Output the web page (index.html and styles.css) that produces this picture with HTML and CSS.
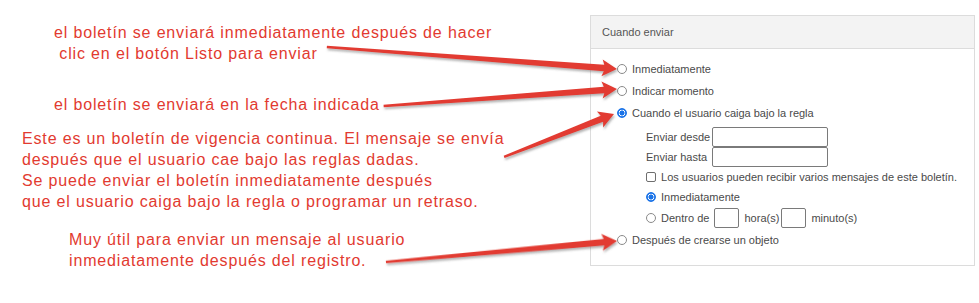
FILE: index.html
```html
<!DOCTYPE html>
<html lang="es">
<head>
  <meta charset="UTF-8" />
  <title>Cuando enviar</title>
  <link rel="stylesheet" href="styles.css">
</head>
<body>
  <div class="page">
    <div class="notes">
      <p class="note note-listo">el boletín se enviará inmediatamente después de hacer<br>&nbsp;clic en el botón Listo para enviar</p>
      <p class="note note-fecha">el boletín se enviará en la fecha indicada</p>
      <p class="note note-regla">Este es un boletín de vigencia continua. El mensaje se envía<br>después que el usuario cae bajo las reglas dadas.<br>Se puede enviar el boletín inmediatamente después<br>que el usuario caiga bajo la regla o programar un retraso.</p>
      <p class="note note-objeto">Muy útil para enviar un mensaje al usuario<br>inmediatamente después del registro.</p>
    </div>

    <section class="panel">
      <div class="panel-head">Cuando enviar</div>
      <div class="panel-body">
        <label class="opt"><input type="radio" name="when"> Inmediatamente</label>
        <label class="opt"><input type="radio" name="when"> Indicar momento</label>
        <label class="opt"><input type="radio" name="when" checked> Cuando el usuario caiga bajo la regla</label>

        <div class="sub">
          <div class="field"><span class="field-label">Enviar desde</span><input type="text" class="text-in"></div>
          <div class="field"><span class="field-label">Enviar hasta</span><input type="text" class="text-in"></div>
          <label class="sub-opt check-row"><input type="checkbox"> Los usuarios pueden recibir varios mensajes de este boletín.</label>
          <label class="sub-opt now-row"><input type="radio" name="delay" checked> Inmediatamente</label>
          <label class="sub-opt delay-row"><input type="radio" name="delay"> Dentro de <input type="text" class="small-in"> hora(s)<input type="text" class="small-in"> minuto(s)</label>
        </div>

        <label class="opt"><input type="radio" name="when"> Después de crearse un objeto</label>
      </div>
    </section>

    <svg class="arrows" width="979" height="303" viewBox="0 0 979 303">
      <defs>
        <filter id="shade" x="-10%" y="-50%" width="120%" height="200%">
          <feDropShadow dx="1" dy="2" stdDeviation="1" flood-color="#666" flood-opacity="0.5"/>
        </filter>
      </defs>
      <g fill="#e23a30" filter="url(#shade)">
        <g transform="translate(617 69) rotate(4.34)">
          <polygon points="0,0 -15,-8.5 -13,-3.3 -291,-1.2 -291,1.2 -13,3.3 -15,8.5"/>
        </g>
        <g transform="translate(617 89) rotate(-4.17)">
          <polygon points="0,0 -15,-8.5 -13,-3.3 -234,-1.2 -234,1.2 -13,3.3 -15,8.5"/>
        </g>
        <g transform="translate(614 114) rotate(-21.35)">
          <polygon points="0,0 -15,-8.5 -13,-3.3 -118,-1.2 -118,1.2 -13,3.3 -15,8.5"/>
        </g>
        <g transform="translate(617 241) rotate(-5.19)">
          <polygon points="0,0 -15,-8.5 -13,-3.3 -232,-1.2 -232,1.2 -13,3.3 -15,8.5"/>
        </g>
      </g>
    </svg>
  </div>
</body>
</html>
```

FILE: styles.css
```css
* {
  margin: 0;
  padding: 0;
  box-sizing: border-box;
}

body {
  background: #fff;
  font-family: "Liberation Sans", Arial, sans-serif;
}

.page {
  position: relative;
  display: flex;
  width: 979px;
  height: 303px;
  overflow: hidden;
}

/* annotations on the left */
.notes {
  width: 590px;
  flex: none;
}

.note {
  color: #e23a30;
  font-size: 16px;
  line-height: 21px;
  letter-spacing: 0.85px;
  white-space: nowrap;
}

.note-listo {
  margin-top: 22px;
  padding-left: 54px;
}

.note-fecha {
  margin-top: 30px;
  padding-left: 54px;
}

.note-regla {
  margin-top: 13px;
  padding-left: 22px;
}

.note-objeto {
  margin-top: 17px;
  padding-left: 69px;
}

/* panel */
.panel {
  width: 385px;
  margin-top: 15px;
  align-self: flex-start;
  border: 1px solid #dcdcdc;
  background: #fff;
  color: #4a4a4a;
  font-size: 11px;
}

.panel-head {
  height: 33px;
  padding-left: 11px;
  display: flex;
  align-items: center;
  background: #f3f3f3;
  border-bottom: 1px solid #dcdcdc;
  color: #555;
}

.panel-body {
  padding: 9px 0 14px;
}

.opt {
  height: 22px;
  display: flex;
  align-items: center;
  padding-left: 26px;
  white-space: pre;
}

.sub {
  padding-left: 55px;
  margin-top: 3px;
}

.field {
  height: 20px;
  display: flex;
  align-items: center;
}

.field-label {
  width: 66px;
}

.sub-opt {
  display: flex;
  align-items: center;
  white-space: pre;
}

.check-row { height: 19px; }
.now-row { height: 21px; }
.delay-row { height: 22px; }

/* form controls */
input[type="radio"],
input[type="checkbox"] {
  appearance: none;
  -webkit-appearance: none;
  width: 10px;
  height: 10px;
  margin: 0 2px 0 0;
  border: 1px solid #8a8a8a;
  border-radius: 50%;
  background: #fff;
  flex: none;
}

input[type="radio"]:checked {
  border-color: #1a73e8;
  background: radial-gradient(circle, #1a73e8 0 2.3px, #fff 2.8px 3.1px, #1a73e8 3.6px);
}

input[type="checkbox"] {
  border-radius: 2px;
  border-color: #6e6e6e;
}

.text-in,
.small-in {
  height: 20px;
  border: 1px solid #7a7a7a;
  border-radius: 2px;
  background: #fff;
  font: inherit;
}

.text-in {
  width: 116px;
}

.small-in {
  width: 25px;
  margin: 0 2px;
}

/* arrows drawn over everything */
.arrows {
  position: absolute;
  left: 0;
  top: 0;
  pointer-events: none;
}
```
